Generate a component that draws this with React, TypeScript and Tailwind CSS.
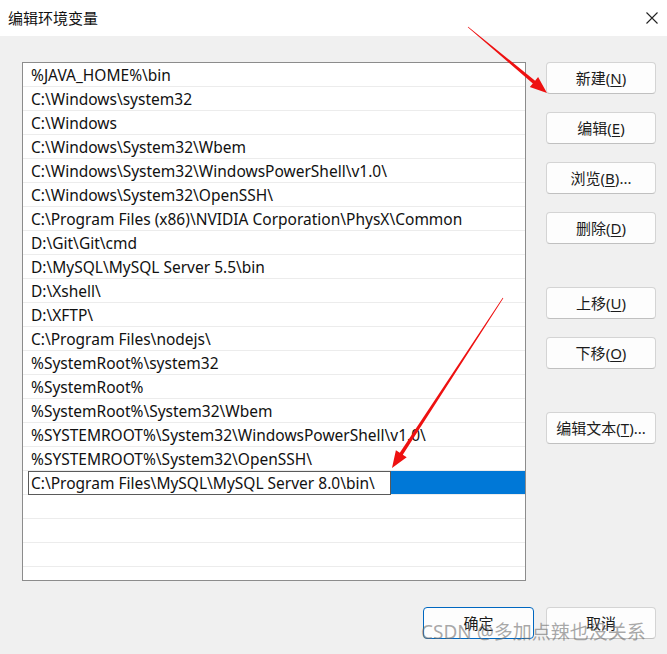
import React from "react";

const FONT = { fontFamily: '"Noto Sans", "Noto Sans CJK SC", sans-serif' };

const rows = [
  "%JAVA_HOME%\\bin",
  "C:\\Windows\\system32",
  "C:\\Windows",
  "C:\\Windows\\System32\\Wbem",
  "C:\\Windows\\System32\\WindowsPowerShell\\v1.0\\",
  "C:\\Windows\\System32\\OpenSSH\\",
  "C:\\Program Files (x86)\\NVIDIA Corporation\\PhysX\\Common",
  "D:\\Git\\Git\\cmd",
  "D:\\MySQL\\MySQL Server 5.5\\bin",
  "D:\\Xshell\\",
  "D:\\XFTP\\",
  "C:\\Program Files\\nodejs\\",
  "%SystemRoot%\\system32",
  "%SystemRoot%",
  "%SystemRoot%\\System32\\Wbem",
  "%SYSTEMROOT%\\System32\\WindowsPowerShell\\v1.0\\",
  "%SYSTEMROOT%\\System32\\OpenSSH\\",
];

function Btn({ label, k, tail, className = "" }: { label: string; k: string; tail?: string; className?: string }) {
  return (
    <div
      className={
        "w-[110px] h-[32px] flex items-center justify-center rounded-[4px] bg-[#fdfdfd] border border-[#d4d4d4] border-b-[#c0c0c0] text-[15px] text-[#1b1b1b] " +
        className
      }
    >
      <span>
        {label}(<span className="underline underline-offset-2">{k}</span>){tail}
      </span>
    </div>
  );
}

function arrowPoints(x1: number, y1: number, x2: number, y2: number) {
  const dx = x2 - x1;
  const dy = y2 - y1;
  const len = Math.hypot(dx, dy);
  const ux = dx / len;
  const uy = dy / len;
  const nx = -uy;
  const ny = ux;
  const headLen = 17;
  const headW = 6.5;
  const bx = x2 - ux * headLen;
  const by = y2 - uy * headLen;
  const w0 = 0.3;
  const w1 = 1.8;
  const pts = [
    [x1 + nx * w0, y1 + ny * w0],
    [bx + nx * w1, by + ny * w1],
    [bx + nx * headW, by + ny * headW],
    [x2, y2],
    [bx - nx * headW, by - ny * headW],
    [bx - nx * w1, by - ny * w1],
    [x1 - nx * w0, y1 - ny * w0],
  ];
  return pts.map((p) => p[0].toFixed(1) + "," + p[1].toFixed(1)).join(" ");
}

export default function App() {
  const empties = Array.from({ length: 4 });
  return (
    <div className="relative w-[667px] h-[654px] overflow-hidden bg-[#f0f0f0]" style={FONT}>
      {/* title bar */}
      <div className="h-[36px] bg-white flex items-center justify-between pl-[8px] pr-[8px]">
        <span className="text-[15px] text-[#111] leading-none">编辑环境变量</span>
        <svg width="14" height="14" viewBox="0 0 14 14">
          <path d="M1.5 1.5 L12.5 12.5 M12.5 1.5 L1.5 12.5" stroke="#222" strokeWidth="1.1" fill="none" />
        </svg>
      </div>

      {/* body */}
      <div className="flex pl-[22px] pt-[26px]">
        <div className="w-[504px] h-[519px] border border-[#8c8c8c] bg-white overflow-hidden">
          {rows.map((r, i) => (
            <div
              key={i}
              className="h-[24px] border-b border-[#ececec] pl-[8px] pt-[3px] flex items-center text-[15.5px] text-[#111] whitespace-nowrap"
            >
              {r}
            </div>
          ))}
          <div className="h-[24px] flex border-b border-[#ececec]">
            <div className="w-[5px] bg-white" />
            <div className="w-[363px] h-[24px] border border-[#5a5a5a] bg-white pl-[2px] pt-[2px] flex items-center text-[15.5px] text-[#111] whitespace-nowrap overflow-hidden">
              C:\Program Files\MySQL\MySQL Server 8.0\bin\
            </div>
            <div className="flex-1 bg-[#0078d7]" />
          </div>
          {empties.map((_, i) => (
            <div key={i} className="h-[24px] border-b border-[#ececec]" />
          ))}
        </div>

        <div className="ml-[20px] flex flex-col">
          <Btn label="新建" k="N" />
          <Btn label="编辑" k="E" className="mt-[18px]" />
          <Btn label="浏览" k="B" tail="..." className="mt-[18px]" />
          <Btn label="删除" k="D" className="mt-[18px]" />
          <Btn label="上移" k="U" className="mt-[43px]" />
          <Btn label="下移" k="O" className="mt-[18px]" />
          <Btn label="编辑文本" k="T" tail="..." className="mt-[43px]" />
        </div>
      </div>

      {/* bottom buttons */}
      <div className="flex justify-end gap-[12px] pr-[11px] mt-[26px]">
        <div className="w-[111px] h-[32px] flex items-center justify-center rounded-[4px] bg-[#fdfdfd] border-[1.5px] border-[#0067c0] text-[15px] text-[#1b1b1b]">
          确定
        </div>
        <div className="w-[110px] h-[32px] flex items-center justify-center rounded-[4px] bg-[#fdfdfd] border border-[#d4d4d4] border-b-[#c0c0c0] text-[15px] text-[#1b1b1b]">
          取消
        </div>
      </div>

      {/* watermark */}
      <div className="absolute left-[421px] top-[623px] text-[19px] leading-none text-[rgba(110,110,110,0.6)] whitespace-nowrap">
        CSDN @多加点辣也没关系
      </div>

      {/* red arrows */}
      <svg className="absolute left-0 top-0 pointer-events-none" width="667" height="654">
        <polygon points={arrowPoints(468, 27, 547, 93)} fill="#ee1111" />
        <polygon points={arrowPoints(503, 298, 392, 468)} fill="#ee1111" />
      </svg>
    </div>
  );
}
